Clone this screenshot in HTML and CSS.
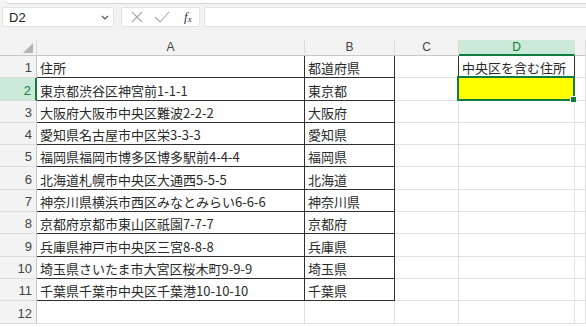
FILE: index.html
```html
<!DOCTYPE html>
<html lang="ja">

<head>
  <meta charset="UTF-8">
  <title>住所一覧</title>
  <link rel="stylesheet" href="styles.css">
</head>

<body>
  <div class="ribbon-edge"></div>

  <div class="formula-bar">
    <div class="name-box">
      <span>D2</span>
      <svg class="chevron" width="8" height="5" viewBox="0 0 8 5"><path d="M1 1 L4 4 L7 1" fill="none" stroke="#555" stroke-width="1.2"/></svg>
    </div>
    <div class="fx-box">
      <svg width="14" height="14" viewBox="0 0 14 14"><path d="M2 2 L12 12 M12 2 L2 12" stroke="#a9a9a9" stroke-width="1.1"/></svg>
      <svg width="16" height="14" viewBox="0 0 16 14"><path d="M1 7 L6 12 L15 2" fill="none" stroke="#a9a9a9" stroke-width="1.1"/></svg>
      <span class="fx">f<sub>x</sub></span>
    </div>
    <div class="formula-input"></div>
  </div>

  <div class="sheet">
    <div class="corner"><span class="tri"></span></div>
    <div class="col-head">A</div>
    <div class="col-head">B</div>
    <div class="col-head">C</div>
    <div class="col-head active">D</div>
    <div class="col-head"></div>

    <div class="row-head">1</div>
    <div class="cell t-a">住所</div>
    <div class="cell t-b">都道府県</div>
    <div class="cell"></div>
    <div class="cell d1">中央区を含む住所</div>
    <div class="cell"></div>

    <div class="row-head active">2</div>
    <div class="cell t-a">東京都渋谷区神宮前1-1-1</div>
    <div class="cell t-b">東京都</div>
    <div class="cell"></div>
    <div class="cell d2"><span class="selection"><span class="handle"></span></span></div>
    <div class="cell"></div>

    <div class="row-head">3</div>
    <div class="cell t-a">大阪府大阪市中央区難波2-2-2</div>
    <div class="cell t-b">大阪府</div>
    <div class="cell"></div>
    <div class="cell"></div>
    <div class="cell"></div>

    <div class="row-head">4</div>
    <div class="cell t-a">愛知県名古屋市中区栄3-3-3</div>
    <div class="cell t-b">愛知県</div>
    <div class="cell"></div>
    <div class="cell"></div>
    <div class="cell"></div>

    <div class="row-head">5</div>
    <div class="cell t-a">福岡県福岡市博多区博多駅前4-4-4</div>
    <div class="cell t-b">福岡県</div>
    <div class="cell"></div>
    <div class="cell"></div>
    <div class="cell"></div>

    <div class="row-head">6</div>
    <div class="cell t-a">北海道札幌市中央区大通西5-5-5</div>
    <div class="cell t-b">北海道</div>
    <div class="cell"></div>
    <div class="cell"></div>
    <div class="cell"></div>

    <div class="row-head">7</div>
    <div class="cell t-a">神奈川県横浜市西区みなとみらい6-6-6</div>
    <div class="cell t-b">神奈川県</div>
    <div class="cell"></div>
    <div class="cell"></div>
    <div class="cell"></div>

    <div class="row-head">8</div>
    <div class="cell t-a">京都府京都市東山区祇園7-7-7</div>
    <div class="cell t-b">京都府</div>
    <div class="cell"></div>
    <div class="cell"></div>
    <div class="cell"></div>

    <div class="row-head">9</div>
    <div class="cell t-a">兵庫県神戸市中央区三宮8-8-8</div>
    <div class="cell t-b">兵庫県</div>
    <div class="cell"></div>
    <div class="cell"></div>
    <div class="cell"></div>

    <div class="row-head">10</div>
    <div class="cell t-a">埼玉県さいたま市大宮区桜木町9-9-9</div>
    <div class="cell t-b">埼玉県</div>
    <div class="cell"></div>
    <div class="cell"></div>
    <div class="cell"></div>

    <div class="row-head">11</div>
    <div class="cell t-a">千葉県千葉市中央区千葉港10-10-10</div>
    <div class="cell t-b">千葉県</div>
    <div class="cell"></div>
    <div class="cell"></div>
    <div class="cell"></div>

    <div class="row-head">12</div>
    <div class="cell"></div>
    <div class="cell"></div>
    <div class="cell"></div>
    <div class="cell"></div>
    <div class="cell"></div>
  </div>
</body>

</html>
```

FILE: styles.css
```css
body {
  margin: 0;
  padding: 0;
  background: #f3f3f3;
  font-family: "Noto Sans CJK JP", "Noto Sans", sans-serif;
  overflow: hidden;
}

.ribbon-edge {
  height: 3px;
  margin-left: 6px;
  background: #fff;
  border-bottom: 1px solid #d4d4d4;
  border-bottom-left-radius: 6px;
}

/* formula bar */
.formula-bar {
  display: flex;
  height: 20px;
  margin-top: 3px;
  padding-left: 2px;
  gap: 7px;
}

.name-box {
  width: 112px;
  box-sizing: border-box;
  background: #fff;
  border: 1px solid #e3e3e3;
  border-radius: 2px;
  display: flex;
  align-items: center;
  justify-content: space-between;
  padding: 0 4px 0 6px;
  font-family: "Liberation Sans", Arial, sans-serif;
  font-size: 13px;
  color: #222;
}

.fx-box {
  width: 79px;
  box-sizing: border-box;
  background: #fff;
  border: 1px solid #e3e3e3;
  border-radius: 2px;
  display: flex;
  align-items: center;
  padding-left: 8px;
  gap: 10px;
}

.fx {
  font-family: "Liberation Serif", serif;
  font-style: italic;
  font-size: 13px;
  color: #333;
  margin-left: 4px;
}

.fx sub {
  font-size: 9px;
  vertical-align: -1px;
}

.formula-input {
  flex: 1;
  margin-left: -3px;
  background: #fff;
  border: 1px solid #e3e3e3;
  border-right: none;
}

/* sheet */
.sheet {
  margin-top: 13px;
  display: grid;
  grid-template-columns: 37px 268px 90px 64px 116px 1fr;
  grid-template-rows: 16px 22px 23px 22px 22px 22px 23px 22px 22px 23px 22px 22px 23px 10px;
  background: #fff;
}

.corner,
.col-head {
  background: #f3f3f3;
  border-right: 1px solid #dcdcdc;
  border-bottom: 1px solid #c8c8c8;
}

.corner {
  position: relative;
}

.tri {
  position: absolute;
  right: 3px;
  bottom: 2px;
  width: 0;
  height: 0;
  border-left: 10px solid transparent;
  border-bottom: 10px solid #b4b4b4;
}

.col-head {
  font-family: "Liberation Sans", Arial, sans-serif;
  font-size: 12px;
  color: #444;
  text-align: center;
  line-height: 15px;
}

.col-head.active {
  background: #cbead8;
  color: #107c41;
  border-bottom: 2px solid #107c41;
  line-height: 14px;
}

.row-head {
  background: #f3f3f3;
  border-right: 1px solid #c8c8c8;
  border-bottom: 1px solid #dcdcdc;
  font-family: "Liberation Sans", Arial, sans-serif;
  font-size: 13px;
  color: #444;
  padding: 2px 4px 0 0;
  display: flex;
  align-items: center;
  justify-content: flex-end;
}

.row-head.active {
  background: #cbead8;
  color: #107c41;
  border-right: 2px solid #107c41;
}

.cell {
  border-right: 1px solid #e1e1e1;
  border-bottom: 1px solid #e1e1e1;
  font-size: 13px;
  color: #2a2a2a;
  padding: 2px 0 0 3px;
  display: flex;
  align-items: center;
  white-space: nowrap;
}

.t-a {
  border-bottom-color: #2f2f2f;
}

.t-b {
  border-right-color: #2f2f2f;
  border-bottom-color: #2f2f2f;
  border-left: 1px solid #2f2f2f;
  margin-left: -1px;
}

.d1 {
  border-left: 1px solid #2f2f2f;
  border-right-color: #2f2f2f;
  margin-left: -1px;
}

.d2 {
  position: relative;
  background: #ffff00;
}

.selection {
  position: absolute;
  left: -2px;
  top: -2px;
  right: -1px;
  bottom: -1px;
  border: 2px solid #107c41;
}

.handle {
  position: absolute;
  right: -4px;
  bottom: -4px;
  width: 5px;
  height: 5px;
  background: #107c41;
  border: 1px solid #fff;
}
```
